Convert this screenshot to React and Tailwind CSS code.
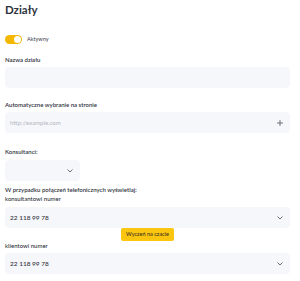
function Label({ children, className = "" }) {
  return (
    <p className={`text-[6px] leading-[8px] font-semibold text-[#2f3340] ${className}`}>
      {children}
    </p>
  );
}

function Chevron() {
  return (
    <svg width="6" height="4" viewBox="0 0 6 4" fill="none" className="text-[#6b6f7a]">
      <polyline points="0.8,0.8 3,3 5.2,0.8" stroke="currentColor" strokeWidth="1" strokeLinecap="round" strokeLinejoin="round" />
    </svg>
  );
}

function SelectBox({ value, className = "" }) {
  return (
    <div className={`h-[21px] rounded-[4px] bg-[#f6f7fb] flex items-center justify-between pl-[5px] pr-[7px] ${className}`}>
      <span className="text-[6.5px] font-semibold text-[#3a3d48]">{value}</span>
      <Chevron />
    </div>
  );
}

export default function App() {
  return (
    <div className="w-[300px] h-[281px] bg-white overflow-hidden pl-[5px] pr-[10px] pt-[3px] font-['Lato',sans-serif]">
      <h1 className="text-[11.5px] leading-[14px] font-bold text-[#2f3340]">Działy</h1>

      {/* Active switch */}
      <div className="flex items-center gap-[5px] mt-[18px]">
        <div className="w-[17px] h-[9px] rounded-full bg-[#f5b800] flex items-center justify-end pr-[1px]">
          <div className="w-[7px] h-[7px] rounded-full bg-white"></div>
        </div>
        <span className="text-[5.5px] text-[#3a3d48]">Aktywny</span>
      </div>

      <Label className="mt-[12px]">Nazwa działu</Label>
      <div className="h-[21px] rounded-[4px] bg-[#f6f7fb] mt-[3px]"></div>

      <Label className="mt-[13px]">Automatyczne wybranie na stronie</Label>
      <div className="h-[21px] rounded-[4px] bg-[#f6f7fb] mt-[3px] flex items-center justify-between pl-[5px] pr-[7px]">
        <span className="text-[6px] text-[#b3b6bf]">http://example.com</span>
        <svg width="6" height="6" viewBox="0 0 6 6" fill="none" className="text-[#6b6f7a]">
          <path d="M3 0.5V5.5M0.5 3H5.5" stroke="currentColor" strokeWidth="1" strokeLinecap="round" />
        </svg>
      </div>

      <Label className="mt-[15px]">Konsultanci:</Label>
      <SelectBox value="" className="w-[75px] mt-[4px]" />

      <Label className="mt-[5px]">W przypadku połączeń telefonicznych wyświetlaj:</Label>
      <p className="text-[6px] leading-[8px] font-medium text-[#2f3340] mt-[1px]">konsultantowi numer</p>
      <SelectBox value="22 118 99 78" className="mt-[4px]" />

      <div className="flex justify-center">
        <button className="h-[13px] px-[5px] rounded-[2px] bg-[#fbc610] text-[5.5px] text-[#3a3020] font-medium">
          Wyczeń na czacie
        </button>
      </div>

      <p className="text-[6px] leading-[8px] font-medium text-[#2f3340] mt-[1px]">klientowi numer</p>
      <SelectBox value="22 118 99 78" className="mt-[3px]" />
    </div>
  );
}
